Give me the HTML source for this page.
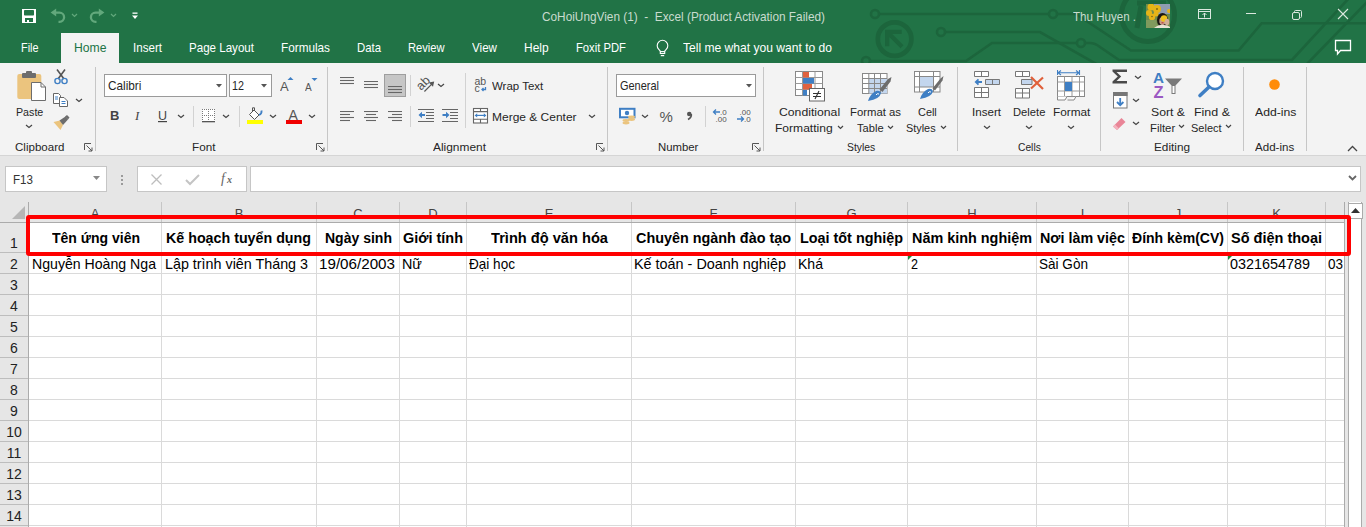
<!DOCTYPE html>
<html><head><meta charset="utf-8">
<style>
*{margin:0;padding:0;box-sizing:border-box}
html,body{width:1366px;height:527px;overflow:hidden;background:#e6e6e6;font-family:"Liberation Sans",sans-serif;position:relative}
.a{position:absolute}
.tx{position:absolute;white-space:nowrap;transform-origin:0 0}
</style></head><body>
<div class="a" style="left:0px;top:0px;width:1366px;height:63px;background:#217346;"></div>
<svg class="a" style="left:0;top:0" width="1366" height="63"><g fill="none" stroke="#1c653c" stroke-width="2.6">
<path d="M879 14 H1049"/><circle cx="875" cy="14" r="4"/><circle cx="1053" cy="14" r="4"/><path d="M1057 14 H1076 L1131 50.5 H1238.6 L1261.7 23.2 H1366"/>
<path d="M945 32 H1040 L1100 66"/><circle cx="941" cy="32" r="4"/>
<path d="M870 61 H966 L992 43 H1077"/><circle cx="866" cy="61" r="4"/><circle cx="1081" cy="43" r="4"/><path d="M1085 43 H1090 Q1095 43 1100 47 L1119 60 H1292 L1350 -3"/>
<path d="M1305 66 L1370 -1"/>
</g>
<circle cx="894.6" cy="39.1" r="16.8" fill="none" stroke="#1c653c" stroke-width="4.7"/>
<circle cx="1148" cy="15" r="26.5" fill="none" stroke="#1c653c" stroke-width="5"/>
<path d="M887.2 46.3 V31.9 H901.7 M889 33.7 L902 46.7" stroke="#1c653c" stroke-width="4.3" fill="none"/>
<path d="M1137 3 H1166 M1141 6 L1137 28" stroke="#1c653c" stroke-width="5" fill="none"/></svg>
<svg class="a" style="left:21px;top:8px;" width="16" height="16" viewBox="0 0 16 16"><rect x="1" y="1" width="14" height="14" fill="#fff"/><rect x="3" y="2" width="10" height="5.5" rx="0.8" fill="#217346"/><rect x="4" y="10" width="8" height="4" fill="#217346"/><rect x="6" y="12" width="2" height="2" fill="#fff"/></svg>
<svg class="a" style="left:50px;top:8px;" width="17" height="16" viewBox="0 0 17 16"><path d="M0.6 4.6 L6.2 0.6 V8.6 Z" fill="#62a87c"/><path d="M5 4.6 H9.5 A4.6 4.6 0 0 1 9.5 13.8 H8.5" fill="none" stroke="#62a87c" stroke-width="2.3"/></svg>
<svg class="a" style="left:71px;top:13px;" width="7" height="5" viewBox="0 0 7 5"><path d="M1 1 L3.5 3.5 L6 1" fill="none" stroke="#62a87c" stroke-width="1.2"/></svg>
<svg class="a" style="left:89px;top:8px;" width="17" height="16" viewBox="0 0 17 16"><path d="M15.4 4.6 L9.8 0.6 V8.6 Z" fill="#62a87c"/><path d="M11 4.6 H6.5 A4.6 4.6 0 0 0 6.5 13.8 H7.5" fill="none" stroke="#62a87c" stroke-width="2.3"/></svg>
<svg class="a" style="left:110px;top:13px;" width="7" height="5" viewBox="0 0 7 5"><path d="M1 1 L3.5 3.5 L6 1" fill="none" stroke="#62a87c" stroke-width="1.2"/></svg>
<svg class="a" style="left:132px;top:12px;" width="7" height="8" viewBox="0 0 7 8"><rect x="0.5" y="0.5" width="5" height="1.3" fill="#fff"/><path d="M0 3.5 H6 L3 7 Z" fill="#fff"/></svg>
<svg class="a" style="left:1146px;top:4px;" width="24" height="24" viewBox="0 0 24 24"><rect width="24" height="24" fill="#6f8b4c"/><rect x="8" y="0" width="16" height="10" fill="#8f9db0"/><g fill="#e6b417"><circle cx="5" cy="3" r="3.5"/><circle cx="11" cy="5" r="4"/><circle cx="3" cy="9" r="3"/><circle cx="6" cy="13" r="3.2"/><circle cx="10" cy="10" r="2.5"/><circle cx="23" cy="7" r="2"/></g><g fill="#7a6212"><circle cx="11" cy="5" r="0.9"/><circle cx="6" cy="12.5" r="0.8"/></g><path d="M0 16 H10 L12 24 H0 Z" fill="#7f9a5d"/><ellipse cx="16.5" cy="16" rx="5.5" ry="7" fill="#1b1613"/><ellipse cx="16.5" cy="17" rx="3.2" ry="4" fill="#c89c86"/><circle cx="18" cy="14.5" r="3.2" fill="#f1c21b"/><rect x="15.5" y="18.3" width="2" height="1" fill="#c03030"/><ellipse cx="21" cy="18" rx="2.3" ry="3.2" fill="#d2ae96"/><path d="M8 24 Q13 20 18 21 Q22 21 24 23 V24 Z" fill="#e9e3d3"/></svg>
<svg class="a" style="left:1197px;top:8px;" width="15" height="12" viewBox="0 0 15 12"><rect x="1.5" y="1.5" width="12" height="9" fill="none" stroke="#dbe8df" stroke-width="1"/><path d="M1.5 3.5 H13.5" stroke="#dbe8df"/><path d="M7.5 9.5 V5 M5.5 7 L7.5 5 L9.5 7" fill="none" stroke="#dbe8df"/></svg>
<div class="a" style="left:1246px;top:13px;width:10px;height:1px;background:#dbe8df;"></div>
<svg class="a" style="left:1291px;top:9px;" width="12" height="11" viewBox="0 0 12 11"><rect x="1.5" y="3.5" width="7" height="7" rx="1.5" fill="none" stroke="#dbe8df"/><path d="M3.5 3.5 V2.5 Q3.5 1.5 4.5 1.5 H9.5 Q10.5 1.5 10.5 2.5 V7.5 Q10.5 8.5 9.5 8.5" fill="none" stroke="#dbe8df"/></svg>
<svg class="a" style="left:1337px;top:8px;" width="12" height="12" viewBox="0 0 12 12"><path d="M1 1 L11 11 M11 1 L1 11" stroke="#dbe8df" stroke-width="1.1"/></svg>
<svg class="a" style="left:1334px;top:39px;" width="18" height="17" viewBox="0 0 18 17"><path d="M1.5 1.5 H16.5 V11.5 H6.5 L3.5 15 V11.5 H1.5 Z" fill="none" stroke="#fff" stroke-width="1.3"/></svg>
<svg class="a" style="left:655px;top:39px;" width="15" height="18" viewBox="0 0 15 18"><path d="M5.5 12.3 L3.6 10.2 A5.3 5.3 0 1 1 11.4 10.2 L9.5 12.3" fill="none" stroke="#fff" stroke-width="1.1"/><rect x="5.3" y="12.6" width="4.4" height="1.9" fill="none" stroke="#fff" stroke-width="1.1"/><path d="M5.8 16.6 H9.2" stroke="#fff" stroke-width="1.2"/></svg>
<div class="a" style="left:61px;top:33px;width:58px;height:30px;background:#f3f3f3;"></div>
<div class="a" style="left:0px;top:63px;width:1366px;height:92px;background:#f3f3f3;"></div>
<div class="a" style="left:0px;top:155px;width:1366px;height:1px;background:#d5d5d5;"></div>
<div class="a" style="left:95px;top:67px;width:1px;height:84px;background:#c6c6c6;"></div>
<div class="a" style="left:327px;top:67px;width:1px;height:84px;background:#c6c6c6;"></div>
<div class="a" style="left:607px;top:67px;width:1px;height:84px;background:#c6c6c6;"></div>
<div class="a" style="left:763px;top:67px;width:1px;height:84px;background:#c6c6c6;"></div>
<div class="a" style="left:957px;top:67px;width:1px;height:84px;background:#c6c6c6;"></div>
<div class="a" style="left:1100px;top:67px;width:1px;height:84px;background:#c6c6c6;"></div>
<div class="a" style="left:1243px;top:67px;width:1px;height:84px;background:#c6c6c6;"></div>
<div class="a" style="left:1306px;top:67px;width:1px;height:84px;background:#c6c6c6;"></div>
<div class="a" style="left:193px;top:106px;width:1px;height:21px;background:#d2d2d2;"></div>
<div class="a" style="left:239px;top:106px;width:1px;height:21px;background:#d2d2d2;"></div>
<div class="a" style="left:410px;top:75px;width:1px;height:21px;background:#d2d2d2;"></div>
<div class="a" style="left:410px;top:106px;width:1px;height:21px;background:#d2d2d2;"></div>
<div class="a" style="left:465px;top:73px;width:1px;height:55px;background:#d2d2d2;"></div>
<div class="a" style="left:705px;top:106px;width:1px;height:21px;background:#d2d2d2;"></div>
<svg class="a" style="left:16px;top:70px;" width="31" height="33" viewBox="0 0 31 33"><rect x="1.3" y="4" width="24" height="25" rx="2" fill="#ebc47e"/><rect x="6" y="3" width="14" height="5" rx="1" fill="#6d6d6d"/><rect x="10" y="1" width="6" height="3" rx="1" fill="#6d6d6d"/><path d="M15.5 12.5 H25 L29.5 17 V30.5 H15.5 Z" fill="#fff" stroke="#6d6d6d" stroke-width="1"/><path d="M25 12.5 V17 H29.5" fill="none" stroke="#6d6d6d"/></svg>
<svg class="a" style="left:25px;top:124px;" width="8" height="5" viewBox="0 0 8 5"><path d="M1 1 L4.0 3.5 L7 1" fill="none" stroke="#444" stroke-width="1.2"/></svg>
<svg class="a" style="left:53px;top:69px;" width="16" height="16" viewBox="0 0 16 16"><path d="M4 0.5 L11 10 M12 0.5 L5 10" stroke="#555" stroke-width="1.6"/><circle cx="4.5" cy="12" r="2.6" fill="none" stroke="#3f7fc4" stroke-width="1.4"/><circle cx="11.5" cy="12" r="2.6" fill="none" stroke="#3f7fc4" stroke-width="1.4"/></svg>
<svg class="a" style="left:53px;top:93px;" width="16" height="15" viewBox="0 0 16 15"><path d="M0.5 0.5 H5.5 L7.5 2.5 V10.5 H0.5 Z" fill="#fff" stroke="#666"/><path d="M2 4 H5 M2 6 H5" stroke="#3f7fc4"/><path d="M6.5 4.5 H11 L14.5 8 V13.5 H6.5 Z" fill="#fff" stroke="#666"/><path d="M8.5 8.5 H12.5 M8.5 10.5 H12.5" stroke="#3f7fc4" stroke-width="1"/></svg>
<svg class="a" style="left:75px;top:98px;" width="8" height="5" viewBox="0 0 8 5"><path d="M1 1 L4.0 3.5 L7 1" fill="none" stroke="#444" stroke-width="1.2"/></svg>
<svg class="a" style="left:53px;top:115px;" width="17" height="16" viewBox="0 0 17 16"><path d="M0.5 7 L7 5.5 L10 10 L7.5 15 Z" fill="#ebc47e"/><path d="M6.5 5.5 L12.5 1.5 L15 4.5 L10 10 Z" fill="#6d6d6d"/><path d="M12 1.5 L14 0 L16.5 2.5 L15 4.5 Z" fill="#6d6d6d"/></svg>
<svg class="a" style="left:84px;top:143px;" width="9" height="9" viewBox="0 0 9 9"><path d="M0.5 0.5 H7 M0.5 0.5 V7 M2.5 2.5 L8 8 M8 4.5 V8 H4.5" fill="none" stroke="#555" stroke-width="1"/></svg>
<div class="a" style="left:104px;top:74px;width:123px;height:23px;background:#fff;border:1px solid #9a9a9a"></div>
<svg class="a" style="left:216px;top:84px;" width="7" height="4" viewBox="0 0 7 4"><path d="M0 0 H6 L3 3.5 Z" fill="#555"/></svg>
<div class="a" style="left:229px;top:74px;width:43px;height:23px;background:#fff;border:1px solid #9a9a9a"></div>
<svg class="a" style="left:261px;top:84px;" width="7" height="4" viewBox="0 0 7 4"><path d="M0 0 H6 L3 3.5 Z" fill="#555"/></svg>
<svg class="a" style="left:280px;top:77px;" width="15" height="15" viewBox="0 0 15 15"><text x="0" y="14" font-size="13" fill="#555" font-family="Liberation Sans">A</text><path d="M7.5 3 L10.5 0 L13.5 3 Z" fill="#3f7fc4"/></svg>
<svg class="a" style="left:305px;top:77px;" width="14" height="15" viewBox="0 0 14 15"><text x="0" y="14" font-size="10" fill="#555" font-family="Liberation Sans">A</text><path d="M6.5 1 L12.5 1 L9.5 4 Z" fill="#3f7fc4"/></svg>
<svg class="a" style="left:109px;top:109px;" width="10" height="13" viewBox="0 0 10 13"><text x="1" y="11" font-size="13" font-weight="bold" fill="#444" font-family="Liberation Sans">B</text></svg>
<svg class="a" style="left:133px;top:109px;" width="10" height="13" viewBox="0 0 10 13"><text x="2" y="11" font-size="13" font-style="italic" fill="#444" font-family="Liberation Serif">I</text></svg>
<svg class="a" style="left:157px;top:109px;" width="11" height="14" viewBox="0 0 11 14"><text x="1" y="11" font-size="12.5" fill="#444" font-family="Liberation Sans">U</text><rect x="1" y="12" width="9" height="1.2" fill="#444"/></svg>
<svg class="a" style="left:177px;top:114px;" width="8" height="5" viewBox="0 0 8 5"><path d="M1 1 L4.0 3.5 L7 1" fill="none" stroke="#444" stroke-width="1.2"/></svg>
<svg class="a" style="left:202px;top:109px;" width="14" height="14" viewBox="0 0 14 14"><rect x="0" y="0" width="13" height="12" fill="#fff"/><g fill="#7a7a7a"><rect x="12" y="4" width="1" height="1"/><rect x="4" y="0" width="1" height="1"/><rect x="12" y="10" width="1" height="1"/><rect x="4" y="6" width="1" height="1"/><rect x="8" y="0" width="1" height="1"/><rect x="0" y="2" width="1" height="1"/><rect x="10" y="0" width="1" height="1"/><rect x="10" y="6" width="1" height="1"/><rect x="8" y="6" width="1" height="1"/><rect x="0" y="8" width="1" height="1"/><rect x="6" y="2" width="1" height="1"/><rect x="12" y="0" width="1" height="1"/><rect x="6" y="8" width="1" height="1"/><rect x="12" y="6" width="1" height="1"/><rect x="0" y="4" width="1" height="1"/><rect x="0" y="10" width="1" height="1"/><rect x="6" y="4" width="1" height="1"/><rect x="12" y="2" width="1" height="1"/><rect x="6" y="10" width="1" height="1"/><rect x="12" y="8" width="1" height="1"/><rect x="0" y="0" width="1" height="1"/><rect x="2" y="0" width="1" height="1"/><rect x="0" y="6" width="1" height="1"/><rect x="2" y="6" width="1" height="1"/><rect x="6" y="0" width="1" height="1"/><rect x="6" y="6" width="1" height="1"/></g><rect x="0" y="12" width="13" height="1.3" fill="#555"/></svg>
<svg class="a" style="left:222px;top:114px;" width="8" height="5" viewBox="0 0 8 5"><path d="M1 1 L4.0 3.5 L7 1" fill="none" stroke="#444" stroke-width="1.2"/></svg>
<svg class="a" style="left:247px;top:107px;" width="17" height="17" viewBox="0 0 17 17"><path d="M2.5 7.5 L7 3 L12 8 L7.5 12.5 Z" fill="#fff" stroke="#555"/><path d="M5.5 4.5 V0.8 H7.5 V3" fill="none" stroke="#555"/><path d="M12 8 Q15 7 14.5 3.5" fill="none" stroke="#3f7fc4" stroke-width="1.8"/><rect x="0" y="13" width="16" height="4" fill="#ffff00"/></svg>
<svg class="a" style="left:269px;top:114px;" width="8" height="5" viewBox="0 0 8 5"><path d="M1 1 L4.0 3.5 L7 1" fill="none" stroke="#444" stroke-width="1.2"/></svg>
<svg class="a" style="left:286px;top:108px;" width="17" height="16" viewBox="0 0 17 16"><text x="2.5" y="11.5" font-size="14" fill="#555" font-family="Liberation Sans">A</text><rect x="0" y="12" width="16" height="4" fill="#f00000"/></svg>
<svg class="a" style="left:308px;top:114px;" width="8" height="5" viewBox="0 0 8 5"><path d="M1 1 L4.0 3.5 L7 1" fill="none" stroke="#444" stroke-width="1.2"/></svg>
<svg class="a" style="left:316px;top:143px;" width="9" height="9" viewBox="0 0 9 9"><path d="M0.5 0.5 H7 M0.5 0.5 V7 M2.5 2.5 L8 8 M8 4.5 V8 H4.5" fill="none" stroke="#555" stroke-width="1"/></svg>
<svg class="a" style="left:340px;top:77px;" width="15" height="10" viewBox="0 0 15 10"><path d="M0 0.5 H14" stroke="#666" stroke-width="1.1"/><path d="M0 3.5 H14" stroke="#666" stroke-width="1.1"/><path d="M0 6.5 H14" stroke="#666" stroke-width="1.1"/></svg>
<svg class="a" style="left:364px;top:81px;" width="15" height="10" viewBox="0 0 15 10"><path d="M0 0.5 H14" stroke="#666" stroke-width="1.1"/><path d="M0 3.5 H14" stroke="#666" stroke-width="1.1"/><path d="M0 6.5 H14" stroke="#666" stroke-width="1.1"/></svg>
<div class="a" style="left:384px;top:74px;width:22px;height:23px;background:#c6c6c6;border:1px solid #9e9e9e"></div>
<svg class="a" style="left:388px;top:86px;" width="15" height="10" viewBox="0 0 15 10"><path d="M0 0.5 H14" stroke="#666" stroke-width="1.1"/><path d="M0 3.5 H14" stroke="#666" stroke-width="1.1"/><path d="M0 6.5 H14" stroke="#666" stroke-width="1.1"/></svg>
<svg class="a" style="left:417px;top:76px;" width="19" height="18" viewBox="0 0 19 18"><g transform="rotate(-45 6.5 7.5)"><text x="-0.5" y="11" font-size="12.5" fill="#555" font-family="Liberation Sans">ab</text></g><path d="M7.4 15.5 L15 7.9" fill="none" stroke="#555" stroke-width="1.2"/><path d="M17.2 5.4 L11.8 6.6 L16 10.8 Z" fill="#555"/></svg>
<svg class="a" style="left:437px;top:83px;" width="8" height="5" viewBox="0 0 8 5"><path d="M1 1 L4.0 3.5 L7 1" fill="none" stroke="#444" stroke-width="1.2"/></svg>
<svg class="a" style="left:340px;top:111px;" width="15" height="13" viewBox="0 0 15 13"><path d="M0 0.5 H14" stroke="#666" stroke-width="1.1"/><path d="M0 3.5 H10" stroke="#666" stroke-width="1.1"/><path d="M0 6.5 H14" stroke="#666" stroke-width="1.1"/><path d="M0 9.5 H10" stroke="#666" stroke-width="1.1"/></svg>
<svg class="a" style="left:364px;top:111px;" width="15" height="13" viewBox="0 0 15 13"><path d="M0 0.5 H14" stroke="#666" stroke-width="1.1"/><path d="M2 3.5 H12" stroke="#666" stroke-width="1.1"/><path d="M0 6.5 H14" stroke="#666" stroke-width="1.1"/><path d="M2 9.5 H12" stroke="#666" stroke-width="1.1"/></svg>
<svg class="a" style="left:388px;top:111px;" width="15" height="13" viewBox="0 0 15 13"><path d="M0 0.5 H14" stroke="#666" stroke-width="1.1"/><path d="M4 3.5 H14" stroke="#666" stroke-width="1.1"/><path d="M0 6.5 H14" stroke="#666" stroke-width="1.1"/><path d="M4 9.5 H14" stroke="#666" stroke-width="1.1"/></svg>
<svg class="a" style="left:418px;top:109px;" width="17" height="14" viewBox="0 0 17 14"><path d="M0 0.5 H16 M8 3.5 H16 M8 6.5 H16 M8 9.5 H16 M0 12.5 H16" stroke="#666" stroke-width="1.1"/><path d="M0.5 6 L4 2.8 V5 H7 V7 H4 V9.2 Z" fill="#3f7fc4"/></svg>
<svg class="a" style="left:442px;top:109px;" width="17" height="14" viewBox="0 0 17 14"><path d="M0 0.5 H16 M8 3.5 H16 M8 6.5 H16 M8 9.5 H16 M0 12.5 H16" stroke="#666" stroke-width="1.1"/><path d="M7.5 6 L4 2.8 V5 H0.5 V7 H4 V9.2 Z" fill="#3f7fc4"/></svg>
<svg class="a" style="left:474px;top:76px;" width="15" height="17" viewBox="0 0 15 17"><text x="0.5" y="8.7" font-size="10.5" fill="#555" font-family="Liberation Sans">ab</text><text x="0.5" y="15.7" font-size="10.5" fill="#555" font-family="Liberation Sans">c</text><path d="M11.5 11 V13.5 H8 M9.5 12 L8 13.5 L9.5 15" fill="none" stroke="#3f7fc4" stroke-width="1.3"/></svg>
<svg class="a" style="left:472px;top:107px;" width="17" height="17" viewBox="0 0 17 17"><rect x="1.5" y="1.5" width="14" height="14.5" fill="#fff" stroke="#666" stroke-width="1.1"/><path d="M1.5 4.6 H15.5 M1.5 12.3 H15.5 M8.5 1.5 V4.6 M8.5 12.3 V16" stroke="#666" stroke-width="1.1"/><path d="M4 8.4 H13" stroke="#3f7fc4" stroke-width="1.2"/><path d="M2.6 8.4 L5.2 6.3 V10.5 Z M14.4 8.4 L11.8 6.3 V10.5 Z" fill="#3f7fc4"/></svg>
<svg class="a" style="left:588px;top:114px;" width="8" height="5" viewBox="0 0 8 5"><path d="M1 1 L4.0 3.5 L7 1" fill="none" stroke="#444" stroke-width="1.2"/></svg>
<svg class="a" style="left:596px;top:143px;" width="9" height="9" viewBox="0 0 9 9"><path d="M0.5 0.5 H7 M0.5 0.5 V7 M2.5 2.5 L8 8 M8 4.5 V8 H4.5" fill="none" stroke="#555" stroke-width="1"/></svg>
<div class="a" style="left:616px;top:74px;width:140px;height:23px;background:#fff;border:1px solid #9a9a9a"></div>
<svg class="a" style="left:746px;top:84px;" width="7" height="4" viewBox="0 0 7 4"><path d="M0 0 H6 L3 3.5 Z" fill="#555"/></svg>
<svg class="a" style="left:619px;top:107px;" width="17" height="18" viewBox="0 0 17 18"><rect x="1" y="1.8" width="14.5" height="8.5" fill="#fff" stroke="#3f7fc4" stroke-width="2"/><circle cx="8" cy="6" r="2.2" fill="#3f7fc4"/><ellipse cx="12.5" cy="10" rx="3.5" ry="1.4" fill="#ebc47e"/><ellipse cx="12.5" cy="12.5" rx="3.5" ry="1.4" fill="#ebc47e"/><ellipse cx="7" cy="13.5" rx="3.5" ry="1.4" fill="#ebc47e"/><ellipse cx="7" cy="16" rx="3.5" ry="1.4" fill="#ebc47e"/></svg>
<svg class="a" style="left:641px;top:114px;" width="8" height="5" viewBox="0 0 8 5"><path d="M1 1 L4.0 3.5 L7 1" fill="none" stroke="#444" stroke-width="1.2"/></svg>
<svg class="a" style="left:659px;top:109px;" width="16" height="15" viewBox="0 0 16 15"><text x="0.5" y="13" font-size="15" fill="#555" font-family="Liberation Sans">%</text></svg>
<svg class="a" style="left:684px;top:108px;" width="10" height="14" viewBox="0 0 10 14"><circle cx="5.3" cy="6" r="2.3" fill="#555"/><path d="M7.3 6 Q7.8 9.5 4 11.5" fill="none" stroke="#555" stroke-width="1.6"/></svg>
<svg class="a" style="left:712px;top:108px;" width="17" height="15" viewBox="0 0 17 15"><text x="8" y="7" font-size="8" fill="#555" font-family="Liberation Sans">.0</text><text x="3.5" y="14" font-size="8" fill="#555" font-family="Liberation Sans">.00</text><path d="M1.5 4 H8 M4 1.5 L1.5 4 L4 6.5" fill="none" stroke="#3f7fc4" stroke-width="1.3"/></svg>
<svg class="a" style="left:736px;top:108px;" width="17" height="15" viewBox="0 0 17 15"><text x="3.5" y="7" font-size="8" fill="#555" font-family="Liberation Sans">.00</text><text x="8" y="14" font-size="8" fill="#555" font-family="Liberation Sans">.0</text><path d="M1 11 H7.5 M5 8.5 L7.5 11 L5 13.5" fill="none" stroke="#3f7fc4" stroke-width="1.3"/></svg>
<svg class="a" style="left:752px;top:143px;" width="9" height="9" viewBox="0 0 9 9"><path d="M0.5 0.5 H7 M0.5 0.5 V7 M2.5 2.5 L8 8 M8 4.5 V8 H4.5" fill="none" stroke="#555" stroke-width="1"/></svg>
<svg class="a" style="left:795px;top:71px;" width="31" height="31" viewBox="0 0 31 31"><rect x="0.5" y="0.5" width="27" height="24" fill="#fff" stroke="#888"/><path d="M0.5 6.5 H27.5 M0.5 12.5 H27.5 M0.5 18.5 H27.5 M7.5 0.5 V24.5 M20 0.5 V24.5" stroke="#999"/><rect x="8" y="1" width="6" height="5.5" fill="#e0623f"/><rect x="8" y="7" width="11" height="5.5" fill="#3f7fc4"/><rect x="8" y="13" width="9" height="5.5" fill="#e0623f"/><rect x="8" y="19" width="4" height="5.5" fill="#3f7fc4"/><rect x="14.5" y="17.5" width="15" height="12.5" fill="#fff" stroke="#666"/><path d="M18 22.5 H26 M18 25.5 H26 M24 20 L20 28" stroke="#333" stroke-width="1.1"/></svg>
<svg class="a" style="left:837px;top:125px;" width="7" height="5" viewBox="0 0 7 5"><path d="M1 1 L3.5 3.5 L6 1" fill="none" stroke="#444" stroke-width="1.2"/></svg>
<svg class="a" style="left:862px;top:73px;" width="30" height="29" viewBox="0 0 30 29"><rect x="0.5" y="0.5" width="24.5" height="20" fill="#fff" stroke="#888"/><rect x="7" y="5.5" width="18" height="15" fill="#c3d6ee"/><path d="M0.5 5.5 H25 M0.5 10.5 H25 M0.5 15.5 H25 M6.8 0.5 V20.5 M12.5 0.5 V20.5 M18.5 0.5 V20.5" stroke="#888"/><path d="M17.5 16.5 L26 6 L29.5 4 L28.5 8.5 L20.5 19 Z" fill="#6d6d6d"/><path d="M6 28 Q8 21 14 18 Q18 17 19 20 Q18 26 6 28 Z" fill="#3f7fc4"/><path d="M14 22 Q15 20 17 21" fill="none" stroke="#fff" stroke-width="1"/></svg>
<svg class="a" style="left:887px;top:125px;" width="7" height="5" viewBox="0 0 7 5"><path d="M1 1 L3.5 3.5 L6 1" fill="none" stroke="#444" stroke-width="1.2"/></svg>
<svg class="a" style="left:914px;top:71px;" width="30" height="29" viewBox="0 0 30 29"><rect x="0.5" y="0.5" width="25.5" height="20.5" fill="#fff" stroke="#888"/><rect x="5.5" y="5.5" width="14" height="10.5" fill="#c3d6ee"/><path d="M0.5 5.5 H26 M0.5 16 H26 M5.5 0.5 V21 M19.5 0.5 V21" stroke="#888"/><path d="M18.5 17.5 L26.5 7.5 L29.5 5 L28.5 9.5 L21 19.5 Z" fill="#6d6d6d"/><path d="M6 28 Q8 21 14 18 Q18 17 19 20 Q18 26 6 28 Z" fill="#3f7fc4"/><path d="M14 22 Q15 20 17 21" fill="none" stroke="#fff" stroke-width="1"/></svg>
<svg class="a" style="left:940px;top:125px;" width="7" height="5" viewBox="0 0 7 5"><path d="M1 1 L3.5 3.5 L6 1" fill="none" stroke="#444" stroke-width="1.2"/></svg>
<svg class="a" style="left:974px;top:71px;" width="27" height="28" viewBox="0 0 27 28"><path d="M0.5 0.5 H14.5 V5.5 H0.5 Z M7.5 0.5 V5.5" fill="#fff" stroke="#777"/><path d="M11.5 8.5 H25.5 V13.5 H11.5 Z M18.5 8.5 V13.5" fill="#c3d6ee" stroke="#777"/><path d="M2 11 H8 M4.5 8.3 L1.8 11 L4.5 13.7" fill="none" stroke="#3f7fc4" stroke-width="1.8"/><path d="M0.5 16.5 H14.5 V26.5 H0.5 Z M7.5 16.5 V26.5 M0.5 21.5 H14.5" fill="#fff" stroke="#777"/></svg>
<svg class="a" style="left:983px;top:125px;" width="8" height="5" viewBox="0 0 8 5"><path d="M1 1 L4.0 3.5 L7 1" fill="none" stroke="#444" stroke-width="1.2"/></svg>
<svg class="a" style="left:1015px;top:71px;" width="30" height="28" viewBox="0 0 30 28"><path d="M0.5 0.5 H14.5 V5.5 H0.5 Z M7.5 0.5 V5.5" fill="#fff" stroke="#777"/><path d="M6.5 8.5 H17 V13.5 H6.5 Z" fill="#c3d6ee" stroke="#777"/><path d="M0.5 17.5 H14.5 V27 H0.5 Z M7.5 17.5 V27 M0.5 22 H14.5" fill="#fff" stroke="#777"/><path d="M16 6 L28 18 M28 6.5 L16 17.5" stroke="#e0603a" stroke-width="2.2"/></svg>
<svg class="a" style="left:1025px;top:125px;" width="8" height="5" viewBox="0 0 8 5"><path d="M1 1 L4.0 3.5 L7 1" fill="none" stroke="#444" stroke-width="1.2"/></svg>
<svg class="a" style="left:1057px;top:70px;" width="29" height="31" viewBox="0 0 29 31"><path d="M1 2.8 H22 M4 0.5 L1 2.8 L4 5 M19 0.5 L22 2.8 L19 5 M0.5 0 V5 M22.5 0 V5" fill="none" stroke="#3f7fc4" stroke-width="1.1"/><rect x="0.5" y="6.5" width="27" height="20" fill="#fff" stroke="#888"/><path d="M0.5 12 H27.5 M0.5 21 H27.5 M7.5 6.5 V26.5 M15 6.5 V26.5 M22.5 6.5 V26.5" stroke="#999"/><rect x="8" y="12" width="7" height="9" fill="#3f7fc4"/><path d="M0.5 26.5 V30 H8 L10 26.5 M10.5 30 H17 L19 26.5" fill="#fff" stroke="#888"/></svg>
<svg class="a" style="left:1067px;top:125px;" width="8" height="5" viewBox="0 0 8 5"><path d="M1 1 L4.0 3.5 L7 1" fill="none" stroke="#444" stroke-width="1.2"/></svg>
<svg class="a" style="left:1112px;top:69px;" width="16" height="16" viewBox="0 0 16 16"><path d="M0.5 0.5 H15 V3 H4.5 L9.2 7.5 L4.5 12 H15 V14.5 H0.5 V12.5 L5.8 7.5 L0.5 2.5 Z" fill="#4a4a4a"/></svg>
<svg class="a" style="left:1134px;top:75px;" width="8" height="5" viewBox="0 0 8 5"><path d="M1 1 L4.0 3.5 L7 1" fill="none" stroke="#444" stroke-width="1.2"/></svg>
<svg class="a" style="left:1113px;top:92px;" width="15" height="17" viewBox="0 0 15 17"><rect x="0.5" y="0.5" width="13.5" height="15.5" fill="#fff" stroke="#777"/><rect x="0" y="0" width="14.5" height="4" fill="#777"/><path d="M7.2 6 V13 M4 10 L7.2 13.2 L10.4 10" fill="none" stroke="#3f7fc4" stroke-width="1.8"/></svg>
<svg class="a" style="left:1132px;top:98px;" width="8" height="5" viewBox="0 0 8 5"><path d="M1 1 L4.0 3.5 L7 1" fill="none" stroke="#444" stroke-width="1.2"/></svg>
<svg class="a" style="left:1112px;top:116px;" width="15" height="14" viewBox="0 0 15 14"><path d="M1 10.5 L9.5 2 L13.5 6 L5 14 Z" fill="#e98597"/><path d="M1 10.5 L3 8.5 L7 12.5 L5 14 Z" fill="#f3b3be"/></svg>
<svg class="a" style="left:1132px;top:121px;" width="8" height="5" viewBox="0 0 8 5"><path d="M1 1 L4.0 3.5 L7 1" fill="none" stroke="#444" stroke-width="1.2"/></svg>
<svg class="a" style="left:1152px;top:71px;" width="32" height="28" viewBox="0 0 32 28"><text x="1" y="12" font-size="15.5" font-weight="bold" fill="#3f7fc4" font-family="Liberation Sans" textLength="11" lengthAdjust="spacingAndGlyphs">A</text><text x="1.5" y="27" font-size="16" font-weight="bold" fill="#9b59c2" font-family="Liberation Sans" textLength="10" lengthAdjust="spacingAndGlyphs">Z</text><path d="M13 7.5 H30 L23.5 14.5 V23 H19.5 V14.5 Z" fill="#7a7a7a"/><path d="M20.5 15 V22 H22.5 V15" fill="#fff"/></svg>
<svg class="a" style="left:1178px;top:124px;" width="7" height="5" viewBox="0 0 7 5"><path d="M1 1 L3.5 3.5 L6 1" fill="none" stroke="#444" stroke-width="1.2"/></svg>
<svg class="a" style="left:1197px;top:70px;" width="29" height="29" viewBox="0 0 29 29"><circle cx="18" cy="11" r="8" fill="#fff" stroke="#3f7fc4" stroke-width="2.4"/><path d="M12 17 L3 25.5" stroke="#3f7fc4" stroke-width="3.6" stroke-linecap="round"/></svg>
<svg class="a" style="left:1225px;top:124px;" width="7" height="5" viewBox="0 0 7 5"><path d="M1 1 L3.5 3.5 L6 1" fill="none" stroke="#444" stroke-width="1.2"/></svg>
<svg class="a" style="left:1268px;top:78px;" width="13" height="13" viewBox="0 0 13 13"><circle cx="6.5" cy="6.5" r="5.3" fill="#ff8c0a"/></svg>
<svg class="a" style="left:1347px;top:145px;" width="11" height="7" viewBox="0 0 11 7"><path d="M1 6 L5.5 1.5 L10 6" fill="none" stroke="#444" stroke-width="1.3"/></svg>
<div class="a" style="left:5px;top:166px;width:102px;height:26px;background:#fff;border:1px solid #c6c6c6"></div>
<svg class="a" style="left:93px;top:176px;" width="8" height="5" viewBox="0 0 8 5"><path d="M0 0 H7 L3.5 4 Z" fill="#888"/></svg>
<div class="a" style="left:121px;top:175px;width:2px;height:2px;background:#9a9a9a;"></div>
<div class="a" style="left:121px;top:179px;width:2px;height:2px;background:#9a9a9a;"></div>
<div class="a" style="left:121px;top:183px;width:2px;height:2px;background:#9a9a9a;"></div>
<div class="a" style="left:137px;top:166px;width:110px;height:26px;background:#fff;border:1px solid #c6c6c6"></div>
<svg class="a" style="left:150px;top:173px;" width="13" height="13" viewBox="0 0 13 13"><path d="M1.5 1.5 L11.5 11.5 M11.5 1.5 L1.5 11.5" stroke="#bdbdbd" stroke-width="1.3"/></svg>
<svg class="a" style="left:185px;top:173px;" width="15" height="13" viewBox="0 0 15 13"><path d="M1 7 L5 11 L14 2" fill="none" stroke="#c4c4c4" stroke-width="2"/></svg>
<svg class="a" style="left:219px;top:170px;" width="18" height="17" viewBox="0 0 18 17"><text x="2" y="13" font-size="14" font-style="italic" fill="#666" font-family="Liberation Serif">f</text><text x="8" y="13" font-size="10" font-style="italic" font-weight="bold" fill="#666" font-family="Liberation Serif">x</text></svg>
<div class="a" style="left:250px;top:166px;width:1111px;height:26px;background:#fff;border:1px solid #c6c6c6"></div>
<svg class="a" style="left:1348px;top:175px;" width="9" height="6" viewBox="0 0 9 6"><path d="M1 1 L4.5 4.5 L8 1" fill="none" stroke="#666" stroke-width="1.8"/></svg>
<div class="a" style="left:0px;top:202px;width:1345px;height:325px;background:#ffffff;"></div>
<div class="a" style="left:0px;top:202px;width:1345px;height:20px;background:#e6e6e6;"></div>
<div class="a" style="left:0px;top:222px;width:1345px;height:1px;background:#ababab;"></div>
<svg class="a" style="left:12px;top:206px;" width="14" height="14" viewBox="0 0 14 14"><path d="M13 0 L13 13 L0 13 Z" fill="#b6b6b6"/></svg>
<div class="a" style="left:28px;top:202px;width:1px;height:20px;background:#c6c6c6;"></div>
<div class="a" style="left:161px;top:202px;width:1px;height:20px;background:#c6c6c6;"></div>
<div class="a" style="left:316px;top:202px;width:1px;height:20px;background:#c6c6c6;"></div>
<div class="a" style="left:399px;top:202px;width:1px;height:20px;background:#c6c6c6;"></div>
<div class="a" style="left:466px;top:202px;width:1px;height:20px;background:#c6c6c6;"></div>
<div class="a" style="left:631px;top:202px;width:1px;height:20px;background:#c6c6c6;"></div>
<div class="a" style="left:795px;top:202px;width:1px;height:20px;background:#c6c6c6;"></div>
<div class="a" style="left:907px;top:202px;width:1px;height:20px;background:#c6c6c6;"></div>
<div class="a" style="left:1036px;top:202px;width:1px;height:20px;background:#c6c6c6;"></div>
<div class="a" style="left:1128px;top:202px;width:1px;height:20px;background:#c6c6c6;"></div>
<div class="a" style="left:1227px;top:202px;width:1px;height:20px;background:#c6c6c6;"></div>
<div class="a" style="left:1325px;top:202px;width:1px;height:20px;background:#c6c6c6;"></div>
<div class="a" style="left:161px;top:223px;width:1px;height:304px;background:#dadada;"></div>
<div class="a" style="left:316px;top:223px;width:1px;height:304px;background:#dadada;"></div>
<div class="a" style="left:399px;top:223px;width:1px;height:304px;background:#dadada;"></div>
<div class="a" style="left:466px;top:223px;width:1px;height:304px;background:#dadada;"></div>
<div class="a" style="left:631px;top:223px;width:1px;height:304px;background:#dadada;"></div>
<div class="a" style="left:795px;top:223px;width:1px;height:304px;background:#dadada;"></div>
<div class="a" style="left:907px;top:223px;width:1px;height:304px;background:#dadada;"></div>
<div class="a" style="left:1036px;top:223px;width:1px;height:304px;background:#dadada;"></div>
<div class="a" style="left:1128px;top:223px;width:1px;height:304px;background:#dadada;"></div>
<div class="a" style="left:1227px;top:223px;width:1px;height:304px;background:#dadada;"></div>
<div class="a" style="left:1325px;top:223px;width:1px;height:304px;background:#dadada;"></div>
<div class="a" style="left:0px;top:223px;width:28px;height:304px;background:#e6e6e6;"></div>
<div class="a" style="left:28px;top:202px;width:1px;height:325px;background:#ababab;"></div>
<div class="a" style="left:29px;width:132px;top:206px;text-align:center;font-size:13px;line-height:15px;color:#444">A</div>
<div class="a" style="left:162px;width:154px;top:206px;text-align:center;font-size:13px;line-height:15px;color:#444">B</div>
<div class="a" style="left:317px;width:82px;top:206px;text-align:center;font-size:13px;line-height:15px;color:#444">C</div>
<div class="a" style="left:400px;width:66px;top:206px;text-align:center;font-size:13px;line-height:15px;color:#444">D</div>
<div class="a" style="left:467px;width:164px;top:206px;text-align:center;font-size:13px;line-height:15px;color:#444">E</div>
<div class="a" style="left:632px;width:163px;top:206px;text-align:center;font-size:13px;line-height:15px;color:#444">F</div>
<div class="a" style="left:796px;width:111px;top:206px;text-align:center;font-size:13px;line-height:15px;color:#444">G</div>
<div class="a" style="left:908px;width:128px;top:206px;text-align:center;font-size:13px;line-height:15px;color:#444">H</div>
<div class="a" style="left:1037px;width:91px;top:206px;text-align:center;font-size:13px;line-height:15px;color:#444">I</div>
<div class="a" style="left:1129px;width:98px;top:206px;text-align:center;font-size:13px;line-height:15px;color:#444">J</div>
<div class="a" style="left:1228px;width:97px;top:206px;text-align:center;font-size:13px;line-height:15px;color:#444">K</div>
<div class="a" style="left:29px;top:252px;width:1316px;height:1px;background:#dadada;"></div>
<div class="a" style="left:0px;top:252px;width:28px;height:1px;background:#bdbdbd;"></div>
<div class="a" style="left:0;width:28px;top:235px;text-align:center;font-size:14px;line-height:16px;color:#222">1</div>
<div class="a" style="left:29px;top:273px;width:1316px;height:1px;background:#dadada;"></div>
<div class="a" style="left:0px;top:273px;width:28px;height:1px;background:#bdbdbd;"></div>
<div class="a" style="left:0;width:28px;top:256px;text-align:center;font-size:14px;line-height:16px;color:#222">2</div>
<div class="a" style="left:29px;top:294px;width:1316px;height:1px;background:#dadada;"></div>
<div class="a" style="left:0px;top:294px;width:28px;height:1px;background:#bdbdbd;"></div>
<div class="a" style="left:0;width:28px;top:277px;text-align:center;font-size:14px;line-height:16px;color:#222">3</div>
<div class="a" style="left:29px;top:315px;width:1316px;height:1px;background:#dadada;"></div>
<div class="a" style="left:0px;top:315px;width:28px;height:1px;background:#bdbdbd;"></div>
<div class="a" style="left:0;width:28px;top:298px;text-align:center;font-size:14px;line-height:16px;color:#222">4</div>
<div class="a" style="left:29px;top:336px;width:1316px;height:1px;background:#dadada;"></div>
<div class="a" style="left:0px;top:336px;width:28px;height:1px;background:#bdbdbd;"></div>
<div class="a" style="left:0;width:28px;top:319px;text-align:center;font-size:14px;line-height:16px;color:#222">5</div>
<div class="a" style="left:29px;top:357px;width:1316px;height:1px;background:#dadada;"></div>
<div class="a" style="left:0px;top:357px;width:28px;height:1px;background:#bdbdbd;"></div>
<div class="a" style="left:0;width:28px;top:340px;text-align:center;font-size:14px;line-height:16px;color:#222">6</div>
<div class="a" style="left:29px;top:378px;width:1316px;height:1px;background:#dadada;"></div>
<div class="a" style="left:0px;top:378px;width:28px;height:1px;background:#bdbdbd;"></div>
<div class="a" style="left:0;width:28px;top:361px;text-align:center;font-size:14px;line-height:16px;color:#222">7</div>
<div class="a" style="left:29px;top:399px;width:1316px;height:1px;background:#dadada;"></div>
<div class="a" style="left:0px;top:399px;width:28px;height:1px;background:#bdbdbd;"></div>
<div class="a" style="left:0;width:28px;top:382px;text-align:center;font-size:14px;line-height:16px;color:#222">8</div>
<div class="a" style="left:29px;top:420px;width:1316px;height:1px;background:#dadada;"></div>
<div class="a" style="left:0px;top:420px;width:28px;height:1px;background:#bdbdbd;"></div>
<div class="a" style="left:0;width:28px;top:403px;text-align:center;font-size:14px;line-height:16px;color:#222">9</div>
<div class="a" style="left:29px;top:441px;width:1316px;height:1px;background:#dadada;"></div>
<div class="a" style="left:0px;top:441px;width:28px;height:1px;background:#bdbdbd;"></div>
<div class="a" style="left:0;width:28px;top:424px;text-align:center;font-size:14px;line-height:16px;color:#222">10</div>
<div class="a" style="left:29px;top:462px;width:1316px;height:1px;background:#dadada;"></div>
<div class="a" style="left:0px;top:462px;width:28px;height:1px;background:#bdbdbd;"></div>
<div class="a" style="left:0;width:28px;top:445px;text-align:center;font-size:14px;line-height:16px;color:#222">11</div>
<div class="a" style="left:29px;top:483px;width:1316px;height:1px;background:#dadada;"></div>
<div class="a" style="left:0px;top:483px;width:28px;height:1px;background:#bdbdbd;"></div>
<div class="a" style="left:0;width:28px;top:466px;text-align:center;font-size:14px;line-height:16px;color:#222">12</div>
<div class="a" style="left:29px;top:504px;width:1316px;height:1px;background:#dadada;"></div>
<div class="a" style="left:0px;top:504px;width:28px;height:1px;background:#bdbdbd;"></div>
<div class="a" style="left:0;width:28px;top:487px;text-align:center;font-size:14px;line-height:16px;color:#222">13</div>
<div class="a" style="left:29px;top:525px;width:1316px;height:1px;background:#dadada;"></div>
<div class="a" style="left:0px;top:525px;width:28px;height:1px;background:#bdbdbd;"></div>
<div class="a" style="left:0;width:28px;top:508px;text-align:center;font-size:14px;line-height:16px;color:#222">14</div>
<div class="a" style="left:1344px;top:202px;width:1px;height:325px;background:#ababab;"></div>
<div class="a" style="left:1345px;top:202px;width:21px;height:325px;background:#e6e6e6;"></div>
<div class="a" style="left:1348px;top:202px;width:14px;height:325px;background:#ffffff;border-left:1px solid #ababab;border-right:1px solid #ababab"></div>
<div class="a" style="left:1348px;top:203px;width:15px;height:16px;background:#fff;border:1px solid #ababab"></div>
<svg class="a" style="left:1350px;top:207px;" width="11" height="7" viewBox="0 0 11 7"><path d="M1 6 L5.5 1 L10 6 Z" fill="#333"/></svg>
<div id="t0" class="tx" style="left:541.5px;top:9px;font-size:13px;line-height:15px;font-weight:400;color:#c9dccf;transform:scaleX(0.9095);">CoHoiUngVien (1)&nbsp; - &nbsp;Excel (Product Activation Failed)</div>
<div id="t1" class="tx" style="left:1073px;top:9px;font-size:13px;line-height:15px;font-weight:400;color:#c9dccf;transform:scaleX(0.8895);">Thu Huyen .</div>
<div id="t2" class="tx" style="left:20.5px;top:40px;font-size:13px;line-height:15px;font-weight:400;color:#ffffff;transform:scaleX(0.8352);">File</div>
<div id="t3" class="tx" style="left:73.5px;top:40px;font-size:13px;line-height:15px;font-weight:400;color:#217346;transform:scaleX(0.9369);">Home</div>
<div id="t4" class="tx" style="left:133px;top:40px;font-size:13px;line-height:15px;font-weight:400;color:#ffffff;transform:scaleX(0.8919);">Insert</div>
<div id="t5" class="tx" style="left:189px;top:40px;font-size:13px;line-height:15px;font-weight:400;color:#ffffff;transform:scaleX(0.8902);">Page Layout</div>
<div id="t6" class="tx" style="left:281px;top:40px;font-size:13px;line-height:15px;font-weight:400;color:#ffffff;transform:scaleX(0.9043);">Formulas</div>
<div id="t7" class="tx" style="left:357px;top:40px;font-size:13px;line-height:15px;font-weight:400;color:#ffffff;transform:scaleX(0.8737);">Data</div>
<div id="t8" class="tx" style="left:408.4px;top:40px;font-size:13px;line-height:15px;font-weight:400;color:#ffffff;transform:scaleX(0.8587);">Review</div>
<div id="t9" class="tx" style="left:472px;top:40px;font-size:13px;line-height:15px;font-weight:400;color:#ffffff;transform:scaleX(0.8944);">View</div>
<div id="t10" class="tx" style="left:524.4px;top:40px;font-size:13px;line-height:15px;font-weight:400;color:#ffffff;transform:scaleX(0.9196);">Help</div>
<div id="t11" class="tx" style="left:576.4px;top:40px;font-size:13px;line-height:15px;font-weight:400;color:#ffffff;transform:scaleX(0.8651);">Foxit PDF</div>
<div id="t12" class="tx" style="left:683px;top:40px;font-size:13px;line-height:15px;font-weight:400;color:#ffffff;transform:scaleX(0.9288);">Tell me what you want to do</div>
<div id="t13" class="tx" style="left:15.7px;top:105px;font-size:11.6px;line-height:13px;font-weight:400;color:#262626;transform:scaleX(0.9205);">Paste</div>
<div id="t14" class="tx" style="left:14.9px;top:140px;font-size:11.6px;line-height:13px;font-weight:400;color:#262626;transform:scaleX(0.9955);">Clipboard</div>
<div id="t15" class="tx" style="left:107.6px;top:78px;font-size:13px;line-height:15px;font-weight:400;color:#262626;transform:scaleX(0.9065);">Calibri</div>
<div id="t16" class="tx" style="left:232px;top:78px;font-size:13px;line-height:15px;font-weight:400;color:#262626;transform:scaleX(0.8294);">12</div>
<div id="t17" class="tx" style="left:191.6px;top:140px;font-size:11.6px;line-height:13px;font-weight:400;color:#262626;transform:scaleX(1.0085);">Font</div>
<div id="t18" class="tx" style="left:433px;top:140px;font-size:11.6px;line-height:13px;font-weight:400;color:#262626;transform:scaleX(1.0279);">Alignment</div>
<div id="t19" class="tx" style="left:492.4px;top:79px;font-size:11.6px;line-height:13px;font-weight:400;color:#262626;transform:scaleX(0.9891);">Wrap Text</div>
<div id="t20" class="tx" style="left:492.4px;top:110px;font-size:11.6px;line-height:13px;font-weight:400;color:#262626;transform:scaleX(1.0337);">Merge &amp; Center</div>
<div id="t21" class="tx" style="left:619.6px;top:78px;font-size:13px;line-height:15px;font-weight:400;color:#262626;transform:scaleX(0.8432);">General</div>
<div id="t22" class="tx" style="left:657.6px;top:140px;font-size:11.6px;line-height:13px;font-weight:400;color:#262626;transform:scaleX(0.9794);">Number</div>
<div id="t23" class="tx" style="left:778.5px;top:105px;font-size:11.6px;line-height:13px;font-weight:400;color:#262626;transform:scaleX(1.0532);">Conditional</div>
<div id="t24" class="tx" style="left:774.5px;top:121px;font-size:11.6px;line-height:13px;font-weight:400;color:#262626;transform:scaleX(1.0411);">Formatting</div>
<div id="t25" class="tx" style="left:849.7px;top:105px;font-size:11.6px;line-height:13px;font-weight:400;color:#262626;transform:scaleX(0.9772);">Format as</div>
<div id="t26" class="tx" style="left:856.6px;top:121px;font-size:11.6px;line-height:13px;font-weight:400;color:#262626;transform:scaleX(0.9596);">Table</div>
<div id="t27" class="tx" style="left:917.6px;top:105px;font-size:11.6px;line-height:13px;font-weight:400;color:#262626;transform:scaleX(0.9407);">Cell</div>
<div id="t28" class="tx" style="left:906.4px;top:121px;font-size:11.6px;line-height:13px;font-weight:400;color:#262626;transform:scaleX(0.9374);">Styles</div>
<div id="t29" class="tx" style="left:846.5px;top:140px;font-size:11.6px;line-height:13px;font-weight:400;color:#262626;transform:scaleX(0.8930);">Styles</div>
<div id="t30" class="tx" style="left:972px;top:105px;font-size:11.6px;line-height:13px;font-weight:400;color:#262626;transform:scaleX(1.0000);">Insert</div>
<div id="t31" class="tx" style="left:1012.6px;top:105px;font-size:11.6px;line-height:13px;font-weight:400;color:#262626;transform:scaleX(0.9667);">Delete</div>
<div id="t32" class="tx" style="left:1052.6px;top:105px;font-size:11.6px;line-height:13px;font-weight:400;color:#262626;transform:scaleX(1.0186);">Format</div>
<div id="t33" class="tx" style="left:1017.6px;top:140px;font-size:11.6px;line-height:13px;font-weight:400;color:#262626;transform:scaleX(0.8844);">Cells</div>
<div id="t34" class="tx" style="left:1151px;top:105px;font-size:11.6px;line-height:13px;font-weight:400;color:#262626;transform:scaleX(1.0553);">Sort &amp;</div>
<div id="t35" class="tx" style="left:1149.5px;top:121px;font-size:11.6px;line-height:13px;font-weight:400;color:#262626;transform:scaleX(0.9780);">Filter</div>
<div id="t36" class="tx" style="left:1194px;top:105px;font-size:11.6px;line-height:13px;font-weight:400;color:#262626;transform:scaleX(1.0741);">Find &amp;</div>
<div id="t37" class="tx" style="left:1191.3px;top:121px;font-size:11.6px;line-height:13px;font-weight:400;color:#262626;transform:scaleX(0.9493);">Select</div>
<div id="t38" class="tx" style="left:1153.6px;top:140px;font-size:11.6px;line-height:13px;font-weight:400;color:#262626;transform:scaleX(1.0154);">Editing</div>
<div id="t39" class="tx" style="left:1254.6px;top:105px;font-size:11.6px;line-height:13px;font-weight:400;color:#262626;transform:scaleX(1.0531);">Add-ins</div>
<div id="t40" class="tx" style="left:1255.4px;top:140px;font-size:11.6px;line-height:13px;font-weight:400;color:#262626;transform:scaleX(0.9971);">Add-ins</div>
<div id="t41" class="tx" style="left:12.6px;top:172px;font-size:13px;line-height:15px;font-weight:400;color:#333333;transform:scaleX(0.8926);">F13</div>
<div id="t42" class="tx" style="left:51.5px;top:230px;font-size:14px;line-height:16px;font-weight:700;color:#000;transform:scaleX(1.0007);">Tên ứng viên</div>
<div id="t43" class="tx" style="left:166px;top:230px;font-size:14px;line-height:16px;font-weight:700;color:#000;transform:scaleX(1.0187);">Kế hoạch tuyển dụng</div>
<div id="t44" class="tx" style="left:325px;top:230px;font-size:14px;line-height:16px;font-weight:700;color:#000;transform:scaleX(1.0014);">Ngày sinh</div>
<div id="t45" class="tx" style="left:403px;top:230px;font-size:14px;line-height:16px;font-weight:700;color:#000;transform:scaleX(1.0314);">Giới tính</div>
<div id="t46" class="tx" style="left:491px;top:230px;font-size:14px;line-height:16px;font-weight:700;color:#000;transform:scaleX(1.0445);">Trình độ văn hóa</div>
<div id="t47" class="tx" style="left:636px;top:230px;font-size:14px;line-height:16px;font-weight:700;color:#000;transform:scaleX(1.0272);">Chuyên ngành đào tạo</div>
<div id="t48" class="tx" style="left:800px;top:230px;font-size:14px;line-height:16px;font-weight:700;color:#000;transform:scaleX(1.0266);">Loại tốt nghiệp</div>
<div id="t49" class="tx" style="left:912px;top:230px;font-size:14px;line-height:16px;font-weight:700;color:#000;transform:scaleX(1.0284);">Năm kinh nghiệm</div>
<div id="t50" class="tx" style="left:1040px;top:230px;font-size:14px;line-height:16px;font-weight:700;color:#000;transform:scaleX(1.0227);">Nơi làm việc</div>
<div id="t51" class="tx" style="left:1132px;top:230px;font-size:14px;line-height:16px;font-weight:700;color:#000;transform:scaleX(1.0022);">Đính kèm(CV)</div>
<div id="t52" class="tx" style="left:1231px;top:230px;font-size:14px;line-height:16px;font-weight:700;color:#000;transform:scaleX(1.0354);">Số điện thoại</div>
<div id="t53" class="tx" style="left:32px;top:256px;font-size:14.5px;line-height:16px;font-weight:400;color:#000;transform:scaleX(0.9735);">Nguyễn Hoàng Nga</div>
<div id="t54" class="tx" style="left:164.5px;top:256px;font-size:14.5px;line-height:16px;font-weight:400;color:#000;transform:scaleX(0.9873);">Lập trình viên Tháng 3</div>
<div id="t55" class="tx" style="left:319px;top:256px;font-size:14.5px;line-height:16px;font-weight:400;color:#000;transform:scaleX(1.0471);">19/06/2003</div>
<div id="t56" class="tx" style="left:402px;top:256px;font-size:14.5px;line-height:16px;font-weight:400;color:#000;transform:scaleX(0.9907);">Nữ</div>
<div id="t57" class="tx" style="left:469px;top:256px;font-size:14.5px;line-height:16px;font-weight:400;color:#000;transform:scaleX(0.9355);">Đại học</div>
<div id="t58" class="tx" style="left:634px;top:256px;font-size:14.5px;line-height:16px;font-weight:400;color:#000;transform:scaleX(0.9923);">Kế toán - Doanh nghiệp</div>
<div id="t59" class="tx" style="left:798px;top:256px;font-size:14.5px;line-height:16px;font-weight:400;color:#000;transform:scaleX(0.9685);">Khá</div>
<div id="t60" class="tx" style="left:910.5px;top:256px;font-size:14.5px;line-height:16px;font-weight:400;color:#000;transform:scaleX(0.8665);">2</div>
<div id="t61" class="tx" style="left:1039px;top:256px;font-size:14.5px;line-height:16px;font-weight:400;color:#000;transform:scaleX(0.9350);">Sài Gòn</div>
<div id="t62" class="tx" style="left:1230px;top:256px;font-size:14.5px;line-height:16px;font-weight:400;color:#000;transform:scaleX(0.9919);">0321654789</div>
<div id="t63" class="tx" style="left:1328px;top:256px;font-size:14.5px;line-height:16px;font-weight:400;color:#000;transform:scaleX(0.9293);">03</div>
<div class="a" style="left:26px;top:215px;width:1325px;height:41px;border:4px solid #ff0000;border-radius:3px"></div><svg class="a" style="left:908px;top:256px;" width="5" height="5" viewBox="0 0 5 5"><path d="M0 0 H4 L0 4 Z" fill="#1f8a3f"/></svg><svg class="a" style="left:1228px;top:256px;" width="5" height="5" viewBox="0 0 5 5"><path d="M0 0 H4 L0 4 Z" fill="#1f8a3f"/></svg>
</body></html>
